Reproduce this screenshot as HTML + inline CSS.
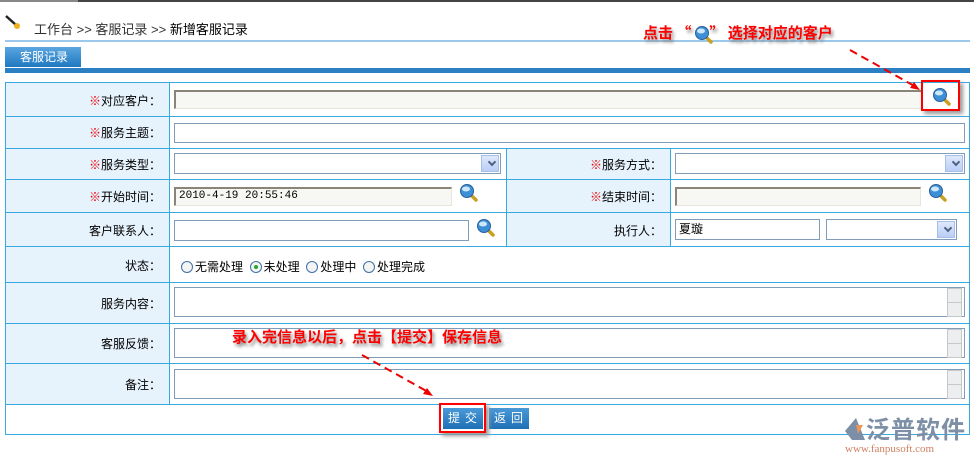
<!DOCTYPE html><html><head><meta charset="utf-8"><style>
*{margin:0;padding:0;box-sizing:border-box}
body{width:974px;height:463px;background:#fff;position:relative;overflow:hidden;font:12px "Liberation Sans","Noto Sans CJK SC",sans-serif;color:#000}
.a{position:absolute}
.lb{position:absolute;background:#e6f2fc}
.r{color:#e00}
.in{position:absolute;border:1px solid #7f9db9;background:#fff;font-size:12px;padding-left:3px}
.ro{border-top:2px solid #8a8578;border-left:2px solid #8a8578;border-right:1px solid #e8e6dc;border-bottom:1px solid #e8e6dc;background:#f7f7f3}
.sel::after{content:"";position:absolute;right:1px;top:1px;bottom:1px;width:16px;background:linear-gradient(#dfe9fb,#b9cdf6);border:1px solid #a7bfe8}
.sel i{position:absolute;right:5px;top:5px;width:6px;height:6px;border-right:2px solid #4d6185;border-bottom:2px solid #4d6185;transform:rotate(45deg);z-index:2}
.mag{position:absolute;width:20px;height:20px}
.hl,.vl{position:absolute;background:#35a9e0}
.sb{position:absolute;right:2px;width:15px;height:15px;background:#eceef0;border:1px solid #c5c9cc}
.btn{position:absolute;height:21px;background:linear-gradient(#4a9ad8,#1f6fb5);color:#fff;font-size:12px;text-align:center;line-height:21px;letter-spacing:5px;padding-left:4px}
.note{position:absolute;color:#f00;font-size:15px;font-weight:bold;text-shadow:2px 3px 3px #888;font-family:"Noto Sans CJK SC",sans-serif;white-space:nowrap}
.rad{display:inline-block;width:12px;height:12px;border:1px solid #3f6fa8;border-radius:50%;background:#f4f4f4;vertical-align:-2px;margin-right:2px;position:relative}
</style></head><body>
<div class="a" style="left:0;top:0;width:974px;height:2px;background:#444"></div>
<div class="a" style="left:0;top:0;width:78px;height:2px;background:#888"></div>
<svg class="a" style="left:5px;top:15px" width="16" height="16"><line x1="1" y1="1" x2="11" y2="10" stroke="#222" stroke-width="2.5"/><circle cx="12" cy="11" r="3" fill="#f0b020"/></svg>
<div class="a" style="left:34px;top:19px;font-size:13px;color:#333">工作台 &gt;&gt; 客服记录 &gt;&gt; <span style="color:#000">新增客服记录</span></div>
<div class="a" style="left:5px;top:40px;width:965px;height:2px;background:#9cc8ec"></div>
<div class="a" style="left:5px;top:47px;width:76px;height:20px;background:linear-gradient(#5aa6e0,#1e78c0);color:#fff;font-size:12px;line-height:20px;padding-left:15px">客服记录</div>
<div class="a" style="left:5px;top:68px;width:965px;height:5px;background:#2a80c2"></div>
<div class="lb" style="left:6px;top:83px;width:163px;height:321px"></div>
<div class="lb" style="left:507px;top:149px;width:163px;height:97px"></div>
<div class="hl" style="left:5px;top:82px;width:965px;height:1px"></div>
<div class="hl" style="left:5px;top:116px;width:965px;height:1px"></div>
<div class="hl" style="left:5px;top:148px;width:965px;height:1px"></div>
<div class="hl" style="left:5px;top:179px;width:965px;height:1px"></div>
<div class="hl" style="left:5px;top:212px;width:965px;height:1px"></div>
<div class="hl" style="left:5px;top:246px;width:965px;height:1px"></div>
<div class="hl" style="left:5px;top:282px;width:965px;height:1px"></div>
<div class="hl" style="left:5px;top:323px;width:965px;height:1px"></div>
<div class="hl" style="left:5px;top:363px;width:965px;height:1px"></div>
<div class="hl" style="left:5px;top:404px;width:965px;height:1px"></div>
<div class="hl" style="left:5px;top:434px;width:965px;height:1px"></div>
<div class="vl" style="left:5px;top:82px;width:1px;height:353px"></div>
<div class="vl" style="left:969px;top:82px;width:1px;height:353px"></div>
<div class="vl" style="left:169px;top:82px;width:1px;height:322px"></div>
<div class="vl" style="left:506px;top:148px;width:1px;height:98px"></div>
<div class="vl" style="left:670px;top:148px;width:1px;height:98px"></div>
<div class="a" style="left:6px;top:92px;width:155px;text-align:right"><span class="r">※</span>对应客户：</div>
<div class="a" style="left:6px;top:124px;width:155px;text-align:right"><span class="r">※</span>服务主题：</div>
<div class="a" style="left:6px;top:156px;width:155px;text-align:right"><span class="r">※</span>服务类型：</div>
<div class="a" style="left:6px;top:188px;width:155px;text-align:right"><span class="r">※</span>开始时间：</div>
<div class="a" style="left:6px;top:222px;width:155px;text-align:right">客户联系人：</div>
<div class="a" style="left:6px;top:257px;width:155px;text-align:right">状态：</div>
<div class="a" style="left:6px;top:295px;width:155px;text-align:right">服务内容：</div>
<div class="a" style="left:6px;top:335px;width:155px;text-align:right">客服反馈：</div>
<div class="a" style="left:6px;top:376px;width:155px;text-align:right">备注：</div>
<div class="a" style="left:507px;top:156px;width:155px;text-align:right"><span class="r">※</span>服务方式：</div>
<div class="a" style="left:507px;top:188px;width:155px;text-align:right"><span class="r">※</span>结束时间：</div>
<div class="a" style="left:507px;top:222px;width:155px;text-align:right">执行人：</div>
<div class="in ro" style="left:174px;top:90px;width:748px;height:19px"></div>
<div class="in" style="left:174px;top:123px;width:791px;height:20px"></div>
<div class="in sel" style="left:174px;top:153px;width:327px;height:21px"><i></i></div>
<div class="in sel" style="left:675px;top:153px;width:290px;height:21px"><i></i></div>
<div class="in ro" style="left:174px;top:187px;width:278px;height:19px;line-height:15px;font-family:'Liberation Mono',monospace;font-size:11px">2010-4-19 20:55:46</div>
<div class="in ro" style="left:675px;top:187px;width:246px;height:19px"></div>
<div class="in" style="left:174px;top:220px;width:295px;height:21px"></div>
<div class="in" style="left:675px;top:219px;width:145px;height:21px;line-height:19px">夏璇</div>
<div class="in sel" style="left:826px;top:219px;width:131px;height:21px"><i></i></div>
<div class="a" style="left:181px;top:258px;font-size:12px"><span class="rad"></span>无需处理&nbsp; <span class="rad"><b style="position:absolute;left:3px;top:3px;width:4px;height:4px;border-radius:50%;background:#2a2"></b></span>未处理&nbsp; <span class="rad"></span>处理中&nbsp; <span class="rad"></span>处理完成</div>
<div class="in" style="left:174px;top:287px;width:791px;height:30px"><div class="sb" style="top:0"></div><div class="sb" style="top:14px"></div></div>
<div class="in" style="left:174px;top:328px;width:791px;height:30px"><div class="sb" style="top:0"></div><div class="sb" style="top:14px"></div></div>
<div class="in" style="left:174px;top:369px;width:791px;height:30px"><div class="sb" style="top:0"></div><div class="sb" style="top:14px"></div></div>
<svg width="0" height="0" style="position:absolute"><defs><g id="mg"><line x1="11" y1="11" x2="17" y2="17" stroke="#c9a020" stroke-width="3.5" stroke-linecap="round"/><circle cx="8" cy="8" r="6.5" fill="#3d8fd6" stroke="#2a5f9a" stroke-width="1"/><ellipse cx="7" cy="6" rx="4" ry="2.5" fill="#cfe7fb"/></g></defs></svg>
<svg class="mag" style="left:932px;top:87px"><use href="#mg"/></svg>
<svg class="mag" style="left:459px;top:183px"><use href="#mg"/></svg>
<svg class="mag" style="left:928px;top:183px"><use href="#mg"/></svg>
<svg class="mag" style="left:476px;top:218px"><use href="#mg"/></svg>
<div class="a" style="left:921px;top:80px;width:39px;height:31px;border:2px solid #f00;box-shadow:3px 3px 4px #999"></div>
<div class="btn" style="left:443px;top:408px;width:40px">提交</div>
<div class="btn" style="left:489px;top:408px;width:40px">返回</div>
<div class="a" style="left:439px;top:403px;width:47px;height:30px;border:2px solid #f00;box-shadow:3px 3px 4px #999"></div>
<div class="note" style="left:643px;top:22px">点击 “<span style="display:inline-block;width:18px"></span>” 选择对应的客户</div>
<svg class="mag" style="left:694px;top:25px"><use href="#mg"/></svg>
<div class="note" style="left:232px;top:326px">录入完信息以后，点击【提交】保存信息</div>
<svg class="a" style="left:0;top:0" width="974" height="463"><g stroke="#e00" stroke-width="2" stroke-dasharray="8,5" fill="none"><line x1="850" y1="50" x2="918" y2="88"/><line x1="362" y1="355" x2="430" y2="393"/></g><polygon points="920,90 910,88 914,82" fill="#e00"/><polygon points="433,396 423,394 427,388" fill="#e00"/></svg>
<svg class="a" style="left:843px;top:416px" width="24" height="26"><path d="M13 2 L2 15 L9 24 L22 24 Z" fill="#7c8fa6"/><path d="M13 9 L20 9 L15 18 Z" fill="#e8965a"/></svg>
<div class="a" style="left:866px;top:414px;font-size:24px;color:#7c8fa6;font-weight:bold;letter-spacing:1px;font-family:'Noto Sans CJK SC',sans-serif;line-height:28px">泛普软件</div>
<div class="a" style="left:845px;top:443px;font-size:11px;color:#d08060;font-family:'Liberation Serif',serif">www.fanpusoft.com</div>
</body></html>
